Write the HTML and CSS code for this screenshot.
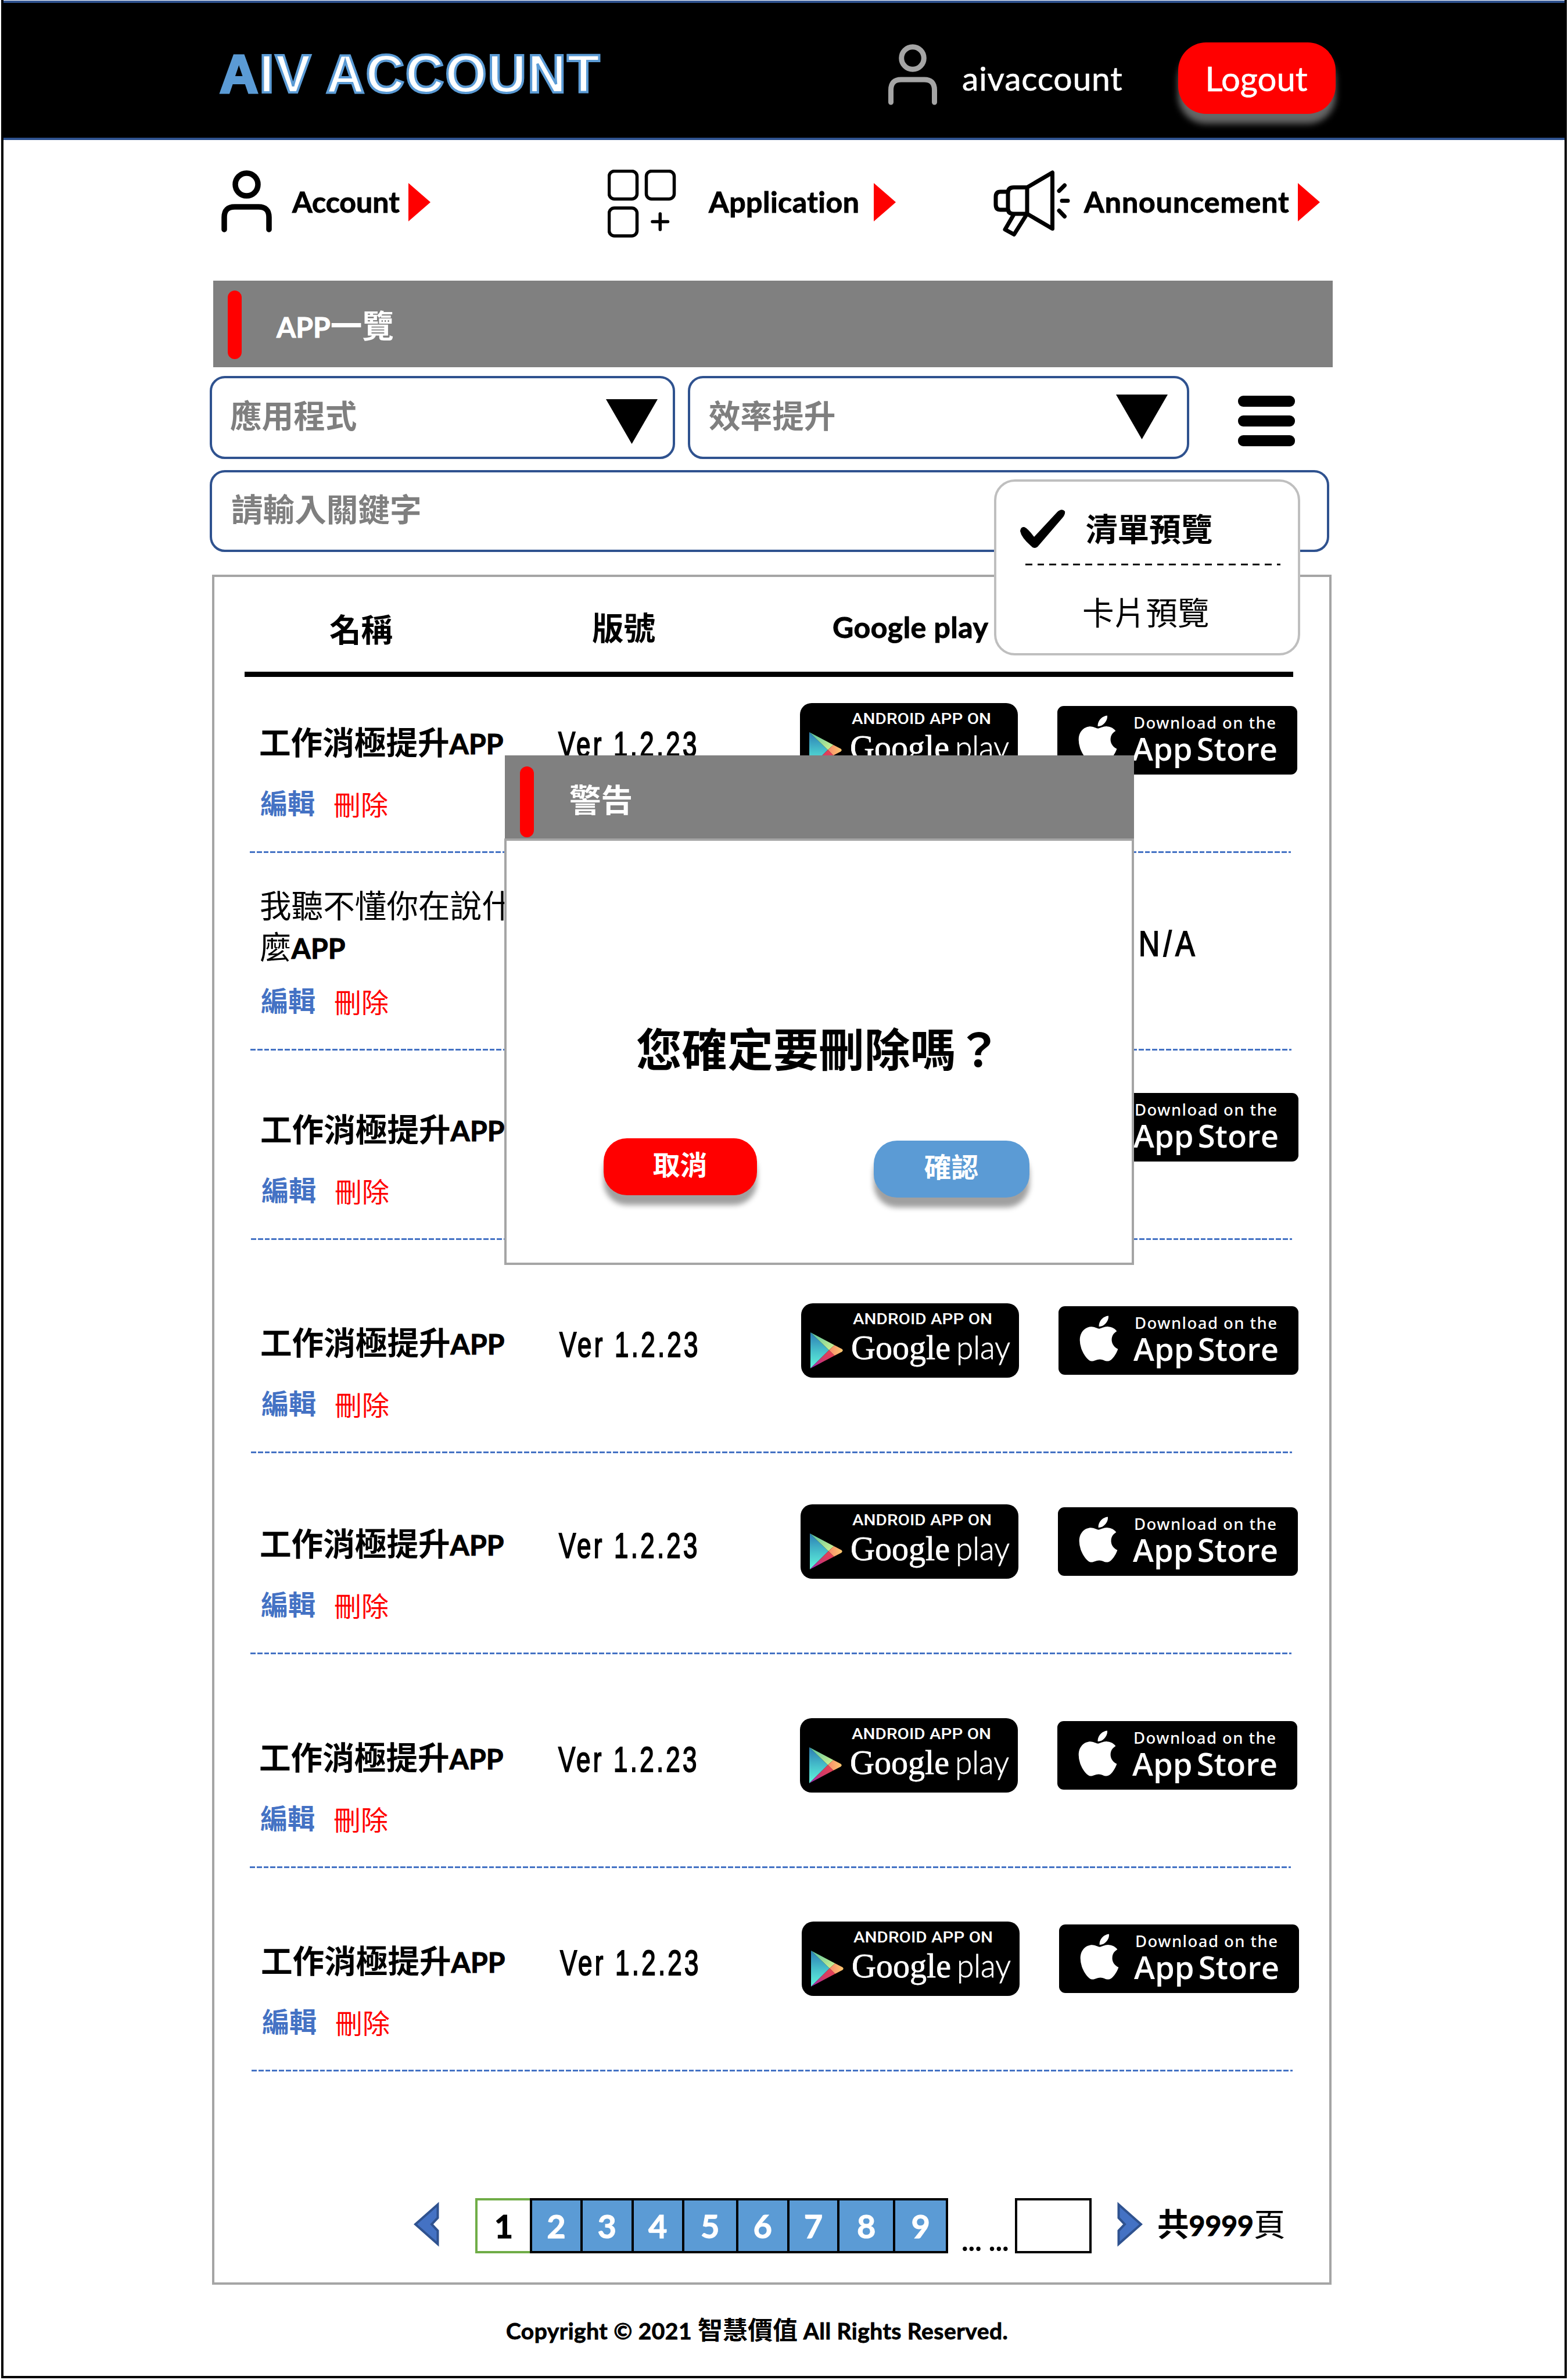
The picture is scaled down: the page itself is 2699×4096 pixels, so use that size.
FILE: index.html
```html
<!DOCTYPE html>
<html lang="zh-Hant">
<head>
<meta charset="utf-8">
<title>AIV Account</title>
<link rel="stylesheet" href="styles.css">
</head>
<body>
<svg class="defs" width="0" height="0" aria-hidden="true">
  <defs>
    <linearGradient id="play-blue" x1="0" y1="0" x2="0" y2="1"><stop offset="0" stop-color="#2b7cb4"/><stop offset=".55" stop-color="#48c4cc"/><stop offset="1" stop-color="#63f5dc"/></linearGradient>
    <linearGradient id="play-green" x1="0" y1="0" x2="1" y2="1"><stop offset="0" stop-color="#4fc0a0"/><stop offset="1" stop-color="#d6f590"/></linearGradient>
    <linearGradient id="play-orange" x1="0" y1="0" x2="1" y2="0"><stop offset="0" stop-color="#f98a6c"/><stop offset="1" stop-color="#fdc86e"/></linearGradient>
    <linearGradient id="play-red" x1="0" y1="1" x2="1" y2="0"><stop offset="0" stop-color="#9a25c0"/><stop offset=".5" stop-color="#d03a68"/><stop offset="1" stop-color="#ec4450"/></linearGradient>
    <symbol id="play-mark" viewBox="0 0 375 128">
      <path fill="url(#play-blue)" d="M16 50L48 80.500L16 112Z"/>
      <path fill="url(#play-green)" d="M16 50L57.500 72L48 80.500Z"/>
      <path fill="url(#play-orange)" d="M57.500 72L70 78.500Q73.500 81 70 83.500L57.500 90L48 80.500Z"/>
      <path fill="url(#play-red)" d="M16 112L48 80.500L57.500 90Z"/>
    </symbol>
    <symbol id="apple-mark" viewBox="0 0 384 512">
      <path fill="#fff" d="M318.7 268.7c-.2-36.7 16.4-64.4 50-84.800-18.800-26.900-47.200-41.700-84.700-44.600-35.500-2.800-74.300 20.700-88.500 20.700-15 0-49.400-19.700-76.400-19.700C63.300 141.200 4 184.800 4 273.500q0 39.300 14.400 81.200c12.800 36.700 59 126.700 107.200 125.200 25.200-.6 43-17.900 75.800-17.900 31.800 0 48.300 17.900 76.400 17.900 48.600-.7 90.400-82.500 102.600-119.300-65.200-30.700-61.700-90-61.700-91.900zm-56.600-164.200c27.300-32.400 24.800-61.900 24-72.500-24.100 1.400-52 16.400-67.900 34.900-17.500 19.800-27.800 44.300-25.600 71.900 26.100 2 49.900-11.400 69.500-34.300z"/>
    </symbol>
  </defs>
</svg>

<div class="page">
  <header class="topbar">
    <h1 class="logo"><span class="logo-a">A</span>IV ACCOUNT</h1>
    <svg class="user-icon" viewBox="0 0 84 105" fill="none" stroke="#a5a5a5" stroke-width="9" stroke-linecap="round"><circle cx="42" cy="24" r="19.300"/><path d="M4.500 100V79Q4.500 61 22 61H62Q79.500 61 79.500 79V100"/></svg>
    <span class="user-name">aivaccount</span>
    <button class="logout">Logout</button>
  </header>

  <main class="content">
    <nav class="nav">
      <a class="nav-item nav-account">
        <svg class="nav-icon" viewBox="381 292 88 117" fill="none" stroke="#000" stroke-width="9.500" stroke-linecap="round"><circle cx="424.500" cy="317.500" r="19.500"/><path d="M386 395V374Q386 356 404 356H445Q463 356 463 374V395"/></svg>
        <span class="nav-label">Account</span>
        <span class="nav-arrow"></span>
      </a>
      <a class="nav-item nav-application">
        <svg class="nav-icon" viewBox="1046 292 118 117" fill="none" stroke="#000" stroke-width="5.500" stroke-linecap="round"><rect x="1048.500" y="294.500" width="48" height="48" rx="9"/><rect x="1112.500" y="294.500" width="48" height="48" rx="9"/><rect x="1048.500" y="358" width="48" height="48" rx="9"/><path d="M1123 381.500H1149.500M1136.300 368V395"/></svg>
        <span class="nav-label">Application</span>
        <span class="nav-arrow"></span>
      </a>
      <a class="nav-item nav-announcement">
        <svg class="nav-icon" viewBox="1710 292 133 117" fill="none" stroke="#000" stroke-width="7" stroke-linecap="round" stroke-linejoin="round"><path d="M1768 322.500L1811.500 297V393.500L1768 368Z"/><path d="M1768 322.500H1745Q1735 322.500 1735 332V359Q1735 368 1745 368H1768"/><path d="M1735 330H1722Q1714 330 1714 339V352Q1714 361 1722 361H1735"/><path d="M1744.500 370L1730 395L1745.500 403.500L1766 371"/><path d="M1832.500 319L1823 328.500M1828 345.500H1838M1823 362.500L1832.500 372.500"/></svg>
        <span class="nav-label">Announcement</span>
        <span class="nav-arrow"></span>
      </a>
    </nav>

    <div class="title-bar"><span class="accent"></span><h2 class="title"><span class="latin">APP</span>一覽</h2></div>

    <div class="filters">
      <div class="field select select-type"><span>應用程式</span><span class="caret"></span></div>
      <div class="field select select-category"><span>效率提升</span><span class="caret"></span></div>
      <div class="hamburger"><span></span><span></span><span></span></div>
    </div>
    <div class="field search"><span>請輸入關鍵字</span></div>

    <section class="panel">
      <div class="table-head">
        <span class="th-name">名稱</span><span class="th-version">版號</span><span class="th-google">Google play</span>
      </div>

      <div class="row row-1">
        <div class="cell-name"><div class="app-name">工作消極提升<span class="latin">APP</span></div><div class="actions"><a class="edit">編輯</a><a class="delete">刪除</a></div></div>
        <div class="cell-version"><span class="gothic">Ver 1.2.23</span></div>
        <svg class="badge-google" viewBox="0 0 375 128"><rect width="375" height="128" rx="20"/><use href="#play-mark"/><text class="g-small" x="89" y="36" textLength="240" lengthAdjust="spacingAndGlyphs">ANDROID APP ON</text><text class="g-serif" x="86" y="96" textLength="171" lengthAdjust="spacingAndGlyphs">Google</text><text class="g-play" x="267" y="96" textLength="93" lengthAdjust="spacingAndGlyphs">play</text></svg>
        <svg class="badge-apple" viewBox="0 0 413 118"><rect width="413" height="118" rx="11"/><use href="#apple-mark" x="36" y="10.500" width="67" height="90"/><text class="a-small" x="131" y="39" textLength="245">Download on the</text><text class="a-big" x="129" y="94" textLength="250" lengthAdjust="spacingAndGlyphs">App Store</text></svg>
      </div>

      <div class="row row-2">
        <div class="cell-name"><div class="app-name plain">我聽不懂你在說什麼<span class="latin">APP</span></div><div class="actions"><a class="edit">編輯</a><a class="delete">刪除</a></div></div>
        <div class="cell-version"></div>
        <div class="badge-google"></div>
        <div class="cell-na"><span class="gothic wide">N/A</span></div>
      </div>

      <div class="row row-3">
        <div class="cell-name"><div class="app-name">工作消極提升<span class="latin">APP</span></div><div class="actions"><a class="edit">編輯</a><a class="delete">刪除</a></div></div>
        <div class="cell-version"></div>
        <div class="badge-google"></div>
        <svg class="badge-apple" viewBox="0 0 413 118"><rect width="413" height="118" rx="11"/><use href="#apple-mark" x="36" y="10.500" width="67" height="90"/><text class="a-small" x="131" y="39" textLength="245">Download on the</text><text class="a-big" x="129" y="94" textLength="250" lengthAdjust="spacingAndGlyphs">App Store</text></svg>
      </div>

      <div class="row row-4">
        <div class="cell-name"><div class="app-name">工作消極提升<span class="latin">APP</span></div><div class="actions"><a class="edit">編輯</a><a class="delete">刪除</a></div></div>
        <div class="cell-version"><span class="gothic">Ver 1.2.23</span></div>
        <svg class="badge-google" viewBox="0 0 375 128"><rect width="375" height="128" rx="20"/><use href="#play-mark"/><text class="g-small" x="89" y="36" textLength="240" lengthAdjust="spacingAndGlyphs">ANDROID APP ON</text><text class="g-serif" x="86" y="96" textLength="171" lengthAdjust="spacingAndGlyphs">Google</text><text class="g-play" x="267" y="96" textLength="93" lengthAdjust="spacingAndGlyphs">play</text></svg>
        <svg class="badge-apple" viewBox="0 0 413 118"><rect width="413" height="118" rx="11"/><use href="#apple-mark" x="36" y="10.500" width="67" height="90"/><text class="a-small" x="131" y="39" textLength="245">Download on the</text><text class="a-big" x="129" y="94" textLength="250" lengthAdjust="spacingAndGlyphs">App Store</text></svg>
      </div>

      <div class="row row-5">
        <div class="cell-name"><div class="app-name">工作消極提升<span class="latin">APP</span></div><div class="actions"><a class="edit">編輯</a><a class="delete">刪除</a></div></div>
        <div class="cell-version"><span class="gothic">Ver 1.2.23</span></div>
        <svg class="badge-google" viewBox="0 0 375 128"><rect width="375" height="128" rx="20"/><use href="#play-mark"/><text class="g-small" x="89" y="36" textLength="240" lengthAdjust="spacingAndGlyphs">ANDROID APP ON</text><text class="g-serif" x="86" y="96" textLength="171" lengthAdjust="spacingAndGlyphs">Google</text><text class="g-play" x="267" y="96" textLength="93" lengthAdjust="spacingAndGlyphs">play</text></svg>
        <svg class="badge-apple" viewBox="0 0 413 118"><rect width="413" height="118" rx="11"/><use href="#apple-mark" x="36" y="10.500" width="67" height="90"/><text class="a-small" x="131" y="39" textLength="245">Download on the</text><text class="a-big" x="129" y="94" textLength="250" lengthAdjust="spacingAndGlyphs">App Store</text></svg>
      </div>

      <div class="row row-6">
        <div class="cell-name"><div class="app-name">工作消極提升<span class="latin">APP</span></div><div class="actions"><a class="edit">編輯</a><a class="delete">刪除</a></div></div>
        <div class="cell-version"><span class="gothic">Ver 1.2.23</span></div>
        <svg class="badge-google" viewBox="0 0 375 128"><rect width="375" height="128" rx="20"/><use href="#play-mark"/><text class="g-small" x="89" y="36" textLength="240" lengthAdjust="spacingAndGlyphs">ANDROID APP ON</text><text class="g-serif" x="86" y="96" textLength="171" lengthAdjust="spacingAndGlyphs">Google</text><text class="g-play" x="267" y="96" textLength="93" lengthAdjust="spacingAndGlyphs">play</text></svg>
        <svg class="badge-apple" viewBox="0 0 413 118"><rect width="413" height="118" rx="11"/><use href="#apple-mark" x="36" y="10.500" width="67" height="90"/><text class="a-small" x="131" y="39" textLength="245">Download on the</text><text class="a-big" x="129" y="94" textLength="250" lengthAdjust="spacingAndGlyphs">App Store</text></svg>
      </div>

      <div class="row row-7">
        <div class="cell-name"><div class="app-name">工作消極提升<span class="latin">APP</span></div><div class="actions"><a class="edit">編輯</a><a class="delete">刪除</a></div></div>
        <div class="cell-version"><span class="gothic">Ver 1.2.23</span></div>
        <svg class="badge-google" viewBox="0 0 375 128"><rect width="375" height="128" rx="20"/><use href="#play-mark"/><text class="g-small" x="89" y="36" textLength="240" lengthAdjust="spacingAndGlyphs">ANDROID APP ON</text><text class="g-serif" x="86" y="96" textLength="171" lengthAdjust="spacingAndGlyphs">Google</text><text class="g-play" x="267" y="96" textLength="93" lengthAdjust="spacingAndGlyphs">play</text></svg>
        <svg class="badge-apple" viewBox="0 0 413 118"><rect width="413" height="118" rx="11"/><use href="#apple-mark" x="36" y="10.500" width="67" height="90"/><text class="a-small" x="131" y="39" textLength="245">Download on the</text><text class="a-big" x="129" y="94" textLength="250" lengthAdjust="spacingAndGlyphs">App Store</text></svg>
      </div>

      <div class="pager">
        <svg class="chevron" viewBox="0 0 44 86"><path d="M41.500 9L3 43L41.500 77V54L31 43L41.500 32Z"/></svg>
        <div class="pages">
          <a class="current">1</a><a>2</a><a>3</a><a>4</a><a>5</a><a>6</a><a>7</a><a>8</a><a>9</a>
        </div>
        <span class="dots">... ...</span>
        <span class="page-input"></span>
        <svg class="chevron next" viewBox="0 0 44 86"><path d="M2.500 9L41 43L2.500 77V54L13 43L2.500 32Z"/></svg>
        <span class="total">共<span class="latin">9999</span><span class="regular">頁</span></span>
      </div>
    </section>

    <footer class="footer">Copyright © 2021 <span class="cjk">智慧價值</span> All Rights Reserved.</footer>
  </main>

  <div class="view-menu">
    <div class="menu-item selected">
      <svg class="check" viewBox="1755 876 80 70"><path d="M1756 914Q1757 906 1763 907Q1769 909 1780 924L1820 881Q1828 874 1833 880Q1834 885 1829 891L1786 941Q1780 946 1774 939Q1758 925 1756 914Z"/></svg>
      <span>清單預覽</span>
    </div>
    <div class="menu-rule"></div>
    <div class="menu-item">卡片預覽</div>
  </div>

  <div class="modal">
    <div class="modal-head"><span class="accent"></span><span class="modal-title">警告</span></div>
    <div class="modal-body">
      <p class="question">您確定要刪除嗎？</p>
      <div class="modal-actions"><button class="btn cancel">取消</button><button class="btn confirm">確認</button></div>
    </div>
  </div>
</div>
</body>
</html>
```
FILE: styles.css
```css
* { box-sizing: border-box; margin: 0; padding: 0; }
body { background: #fff; color: #000; font-family: "Noto Sans CJK TC", sans-serif; }
.defs { position: absolute; }
button { border: 0; font: inherit; }
svg { display: block; flex: none; }

.page { position: relative; width: 2695px; height: 4093px; margin: 0 2px; overflow: hidden; border: 4px solid #000; border-top: 0; padding-top: 1px; }
.page::before { content: ""; position: absolute; left: -4px; top: 0; width: 2695px; height: 1px; background: #fff; }

.topbar { display: flex; align-items: flex-start; height: 240px; margin: 0 -4px; padding-left: 372px; background: #000; border: 4px solid #2f528f; }
.logo { width: 1151px; margin-top: 75px; font: 700 92px/94px "Liberation Sans", Arial, sans-serif; letter-spacing: 1.900px; color: #fff; -webkit-text-stroke: 4px #5b9bd5; white-space: nowrap; }
.logo-a { color: #5b9bd5; }
.user-icon { width: 84px; height: 105px; margin-top: 71px; }
.user-name { width: 372px; margin: 99px 0 0 43px; font: 400 57px/60px Lato, sans-serif; letter-spacing: .8px; color: #fff; -webkit-text-stroke: .6px #fff; white-space: nowrap; }
.logout { width: 271px; height: 123px; margin-top: 68px; padding: 0 2px 0 0; border-radius: 48px; background: #f00; color: #fff; font: 400 58px/60px Lato, sans-serif; -webkit-text-stroke: .6px #fff; box-shadow: 0 17px 12px #666; }

.content { width: 1933px; margin-left: 355px; }
.nav { display: flex; height: 117px; margin-top: 51px; padding-left: 20px; }
.nav-item { display: flex; align-items: center; }
.nav-account { width: 665px; }
.nav-application { width: 664px; }
.nav-icon { height: 117px; }
.nav-label { margin-top: -7px; font: 700 50px/60px Lato, sans-serif; -webkit-text-stroke: 1px #000; white-space: nowrap; }
.nav-arrow { height: 66px; width: 38px; margin-top: -5px; background: #f00; clip-path: polygon(0 0, 100% 50%, 0 100%); }
.nav-account .nav-label { width: 200px; margin-left: 34px; }
.nav-application .nav-label { width: 284px; margin-left: 56px; letter-spacing: .5px; }
.nav-announcement .nav-label { width: 368px; margin-left: 23px; letter-spacing: 1px; }

.title-bar { display: flex; align-items: center; width: 1927px; height: 149px; margin: 74px 0 0 6px; padding: 2px 0 0 25px; background: #808080; color: #fff; }
.accent { width: 24px; height: 118px; border-radius: 12px; background: #f00; }
.title { margin: -2px 0 0 60px; font-size: 54.600px; line-height: 60px; font-weight: 700; }
.latin { font-family: Lato, sans-serif; font-size: 48px; font-weight: 700; line-height: 0; -webkit-text-stroke: 1px currentColor; }

.filters { display: flex; height: 143px; margin-top: 15px; }
.field { display: flex; border: 4px solid #2f528f; border-radius: 26px; background: #fff; color: #7f7f7f; font-size: 54.600px; line-height: 60px; font-weight: 700; }
.field span:first-child { margin-top: 32px; }
.select { justify-content: space-between; }
.select-type { width: 801px; padding: 0 26px 0 31px; }
.select-category { width: 863px; margin-left: 22px; padding: 0 33px 0 32px; }
.caret { width: 89px; height: 77px; margin-top: 36px; background: #000; clip-path: polygon(0 0, 100% 0, 50% 100%); }
.select-category .caret { margin-top: 28px; }
.hamburger { display: flex; flex-direction: column; gap: 15px; margin: 34px 0 0 84px; }
.hamburger span, .hamburger span:first-child { width: 98px; height: 19px; margin-top: 0; border-radius: 9px; background: #000; }
.search { width: 1927px; height: 141px; margin-top: 19px; padding-left: 33px; }
.search span:first-child { margin-top: 31px; }

.panel { width: 1927px; height: 2943px; margin: 39px 0 0 4px; border: 4px solid #a5a5a5; }
.table-head { display: flex; width: 1805px; height: 171.500px; margin-left: 52px; padding: 58px 0 0 146px; border-bottom: 9px solid #000; font-size: 54.600px; line-height: 60px; font-weight: 700; white-space: nowrap; }
.th-name { width: 452px; }
.th-version { width: 414px; margin-top: -3px; }
.th-google { margin-top: -2px; font: 700 50px/60px Lato, sans-serif; -webkit-text-stroke: 1px #000; letter-spacing: .5px; }

.row { display: flex; align-items: flex-end; width: 1792px; margin-left: 61px; padding-left: 16px; background: repeating-linear-gradient(90deg, #4472c4 0 8.800px, transparent 8.800px 11.760px) left bottom / 100% 3px no-repeat; }
.row > * { flex: none; }
.row-1 { height: 303.500px; }
.row-2 { height: 340px; margin-left: 62px; }
.row-3 { height: 326px; margin-left: 63px; }
.row-4 { height: 366.500px; margin-left: 63px; }
.row-5 { height: 346.500px; margin-left: 62px; }
.row-6 { height: 367.500px; margin-left: 61px; }
.row-7 { height: 350.500px; margin-left: 64px; }
.cell-name { width: 514px; padding-bottom: 65px; }
.app-name { width: 442px; margin-bottom: 46px; font-size: 54.600px; line-height: 71px; font-weight: 700; white-space: nowrap; }
.app-name.plain { margin-bottom: 34px; font-weight: 400; white-space: normal; word-break: break-all; }
.actions { display: flex; gap: 32px; padding-left: 2px; font-size: 47px; line-height: 47px; }
.edit { color: #4472c4; font-weight: 700; }
.delete { color: #f00; margin-top: 3px; height: 44px; }
.cell-version { width: 417px; padding: 0 0 156px 1px; }
.gothic { display: block; width: max-content; font: 400 61px/61px "Liberation Sans", Arial, sans-serif; letter-spacing: 5.900px; transform: scaleX(.72); transform-origin: left; -webkit-text-stroke: 2px #000; white-space: nowrap; }
.gothic.wide { letter-spacing: 8px; transform: scaleX(.82); }
.badge-google { width: 375px; height: 128px; margin: 0 68px 130px 0; }
.badge-apple { width: 413px; height: 118px; margin-bottom: 135px; }
.cell-na { padding: 0 0 153px 139px; }
.g-small, .g-serif, .g-play, .a-small, .a-big { fill: #fff; }
.g-small { font: 500 26px Roboto, sans-serif; }
.g-serif { font: 400 60px "Liberation Serif", serif; stroke: #fff; stroke-width: .8px; }
.g-play { font: 300 56px Lato, sans-serif; stroke: #fff; stroke-width: .8px; }
.a-small { font: 500 27.500px "Noto Sans", sans-serif; }
.a-big { font: 600 55px "Open Sans", sans-serif; word-spacing: -7px; }

.pager { display: flex; height: 95px; margin-top: 218px; padding-left: 343px; }
.pager > * { flex: none; }
.chevron { width: 44px; height: 86px; margin-top: 2px; fill: #4472c4; stroke: #2f528f; stroke-width: 4px; stroke-miterlimit: 10; }
.pages { display: grid; grid-template-columns: 94px 87px 87.500px 87.500px 92.700px 88px 86.400px 96.400px 94.500px; margin-left: 62px; }
.pages a { height: 95px; border: 4px solid #000; border-right: 0; background: #5b9bd5; color: #fff; font: 700 56px/87px Lato, sans-serif; -webkit-text-stroke: 1px currentColor; text-align: center; }
.pages a:last-child { border-right: 4px solid #000; }
.pages .current { background: #fff; color: #000; border-color: #70ad47; }
.dots { width: 92px; margin: 42px 0 0 23px; font: 700 49px/60px Lato, sans-serif; white-space: nowrap; }
.page-input { width: 132px; height: 95px; border: 4px solid #000; }
.next { margin: 2px 0 0 44px; }
.total { margin: 12px 0 0 25px; font-size: 54.600px; line-height: 60px; font-weight: 700; white-space: nowrap; }
.regular { font-weight: 400; }

.footer { margin: 54px 0 0 510px; font: 700 39px/50px Lato, sans-serif; letter-spacing: .45px; -webkit-text-stroke: .8px #000; white-space: nowrap; }
.cjk { font-family: "Noto Sans CJK TC", sans-serif; font-size: 43px; line-height: 0; letter-spacing: 0; -webkit-text-stroke: 0; }

.view-menu { position: absolute; left: 1705px; top: 825px; width: 527px; height: 303px; border: 4px solid #bfbfbf; border-radius: 36px; background: #fff; }
.menu-item { padding-left: 148px; font-size: 54.600px; line-height: 60px; }
.selected { display: flex; padding: 49px 0 0 40px; font-weight: 700; }
.check { width: 80px; height: 70px; margin: -2px 34px 0 0; }
.menu-rule { width: 439px; height: 3px; margin: 24px 0 49px 50px; background: repeating-linear-gradient(90deg, #000 0 11.800px, transparent 11.800px 20.600px); }

.modal { position: absolute; left: 862px; top: 1300px; width: 1084px; height: 877px; }
.modal-head { display: flex; align-items: flex-start; height: 143px; margin-left: 1px; padding: 19px 0 0 26px; background: #808080; }
.modal-head .accent { height: 122px; }
.modal-title { margin: 25px 0 0 61px; color: #fff; font-size: 54.600px; line-height: 60px; font-weight: 700; }
.modal-body { height: 734px; border: 4px solid #a5a5a5; background: #fff; }
.question { padding: 310px 0 0 223px; font-size: 78.600px; line-height: 90px; font-weight: 700; white-space: nowrap; }
.modal-actions { display: flex; padding: 112px 0 0 167px; }
.btn { height: 98px; border-radius: 40px; color: #fff; font-size: 46.800px; line-height: 80px; font-weight: 700; padding: 0 1px 12px 0; box-shadow: 0 17px 10px #a0a0a0; }
.cancel { width: 264px; background: #f00; }
.confirm { width: 268px; margin: 4px 0 0 201px; background: #5b9bd5; }
```
